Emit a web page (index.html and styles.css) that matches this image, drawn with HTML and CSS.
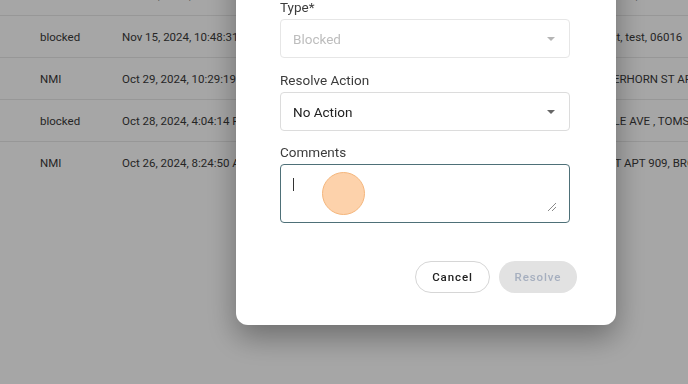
FILE: index.html
```html
<!DOCTYPE html>
<html lang="en">
<head>
<meta charset="UTF-8">
<meta name="viewport" content="width=device-width, initial-scale=1.0">
<title>Transactions</title>
<link rel="stylesheet" href="styles.css">
</head>
<body>

<div class="table">
  <div class="row"><span>declined</span><span>Nov 18, 2024, 9:12:05 AM</span><span class="addr">22 Oak Ln, test, 06016</span></div>
  <div class="row"><span>blocked</span><span>Nov 15, 2024, 10:48:31 AM</span><span class="addr">1. Main test, test, 06016</span></div>
  <div class="row"><span>NMI</span><span>Oct 29, 2024, 10:29:19 PM</span><span class="addr">123 MATTERHORN ST APT 4</span></div>
  <div class="row"><span>blocked</span><span>Oct 28, 2024, 4:04:14 PM</span><span class="addr">5190 MAPLE AVE , TOMS RIVER</span></div>
  <div class="row last"><span>NMI</span><span>Oct 26, 2024, 8:24:50 AM</span><span class="addr">10 MAIN ST APT 909, BROOKLYN</span></div>
</div>

<div class="overlay">
  <div class="modal">
    <h2 class="modal-title">Resolve Transaction</h2>
    <p class="modal-sub">Transaction details</p>

    <div class="fields">
      <label class="field-label">Type*</label>
      <div class="select disabled">
        <span>Blocked</span>
        <span class="caret"></span>
      </div>

      <label class="field-label">Resolve Action</label>
      <div class="select">
        <span>No Action</span>
        <span class="caret"></span>
      </div>

      <label class="field-label">Comments</label>
      <div class="comment-box">
        <span class="text-cursor"></span>
        <svg class="grip" width="10" height="10" viewBox="0 0 10 10">
          <path d="M1 9 L9 1 M5 9 L9 5" stroke="#8a8a8a" stroke-width="1" fill="none"/>
        </svg>
        <span class="click-dot"></span>
      </div>
    </div>

    <div class="actions">
      <button class="btn btn-cancel">Cancel</button>
      <button class="btn btn-resolve" disabled>Resolve</button>
    </div>
  </div>
</div>

</body>
</html>
```

FILE: styles.css
```css
* {
  padding: 0;
  margin: 0;
  box-sizing: border-box;
  font-family: Roboto, "Liberation Sans", sans-serif;
}

body {
  background-color: #fff;
  width: 688px;
  height: 384px;
  overflow: hidden;
}

.table {
  margin-top: -26px;
}

.row {
  display: grid;
  grid-template-columns: 82px 438px 1fr;
  padding-left: 40px;
  height: 42px;
  align-items: center;
  border-bottom: 1px solid #e8e8e8;
  font-size: 11.5px;
  color: #3a3a3a;
  white-space: nowrap;
}

.row.last {
  border-bottom: none;
}

.overlay {
  position: fixed;
  inset: 0;
  background-color: rgba(0, 0, 0, 0.35);
  display: flex;
  justify-content: center;
  align-items: flex-end;
  padding-left: 164px;
  padding-bottom: 59px;
}

.modal {
  width: 380px;
  flex-shrink: 0;
  background-color: #fff;
  border-radius: 12px;
  padding: 24px 39px 32px 44px;
  box-shadow: 0 12px 30px rgba(0, 0, 0, 0.35);
}

.modal-title {
  font-size: 18px;
  font-weight: 500;
  color: #222;
  margin-bottom: 8px;
}

.modal-sub {
  font-size: 13px;
  color: #666;
  margin-bottom: 20px;
}

.fields {
  display: flex;
  flex-direction: column;
  margin-right: 7px;
}

.field-label {
  font-size: 13.5px;
  line-height: 16px;
  color: #3c3c3c;
  margin-bottom: 4px;
}

.select {
  height: 39px;
  border: 1px solid #dcdcdc;
  border-radius: 4px;
  display: flex;
  align-items: center;
  justify-content: space-between;
  padding: 0 14px 0 12px;
  font-size: 13.5px;
  color: #222;
  margin-bottom: 13px;
}

.select.disabled {
  border-color: #e6e6e6;
  color: #bdbdbd;
  margin-bottom: 14px;
}

.caret {
  width: 0;
  height: 0;
  border-left: 4.5px solid transparent;
  border-right: 4.5px solid transparent;
  border-top: 4.5px solid #666;
}

.select.disabled .caret {
  border-top-color: #b5b5b5;
}

.comment-box {
  position: relative;
  height: 59px;
  border: 1.5px solid #4e7078;
  border-radius: 4px;
}

.text-cursor {
  position: absolute;
  left: 12px;
  top: 13px;
  width: 1px;
  height: 13px;
  background-color: #333;
}

.grip {
  position: absolute;
  right: 12px;
  bottom: 10px;
}

.click-dot {
  position: absolute;
  left: 41px;
  top: 7px;
  width: 43px;
  height: 43px;
  border-radius: 50%;
  background-color: #fdd2ab;
  border: 1.5px solid #f5b67c;
}

.actions {
  display: flex;
  justify-content: flex-end;
  gap: 9px;
  margin-top: 38px;
}

.btn {
  height: 32px;
  border-radius: 16px;
  font-size: 11.5px;
  font-weight: 500;
  letter-spacing: 0.9px;
  cursor: pointer;
}

.btn-cancel {
  width: 75px;
  background-color: #fff;
  border: 1px solid #d6d6d6;
  color: #222;
}

.btn-resolve {
  width: 78px;
  background-color: #e2e2e2;
  border: none;
  color: #a6afbf;
}
```
